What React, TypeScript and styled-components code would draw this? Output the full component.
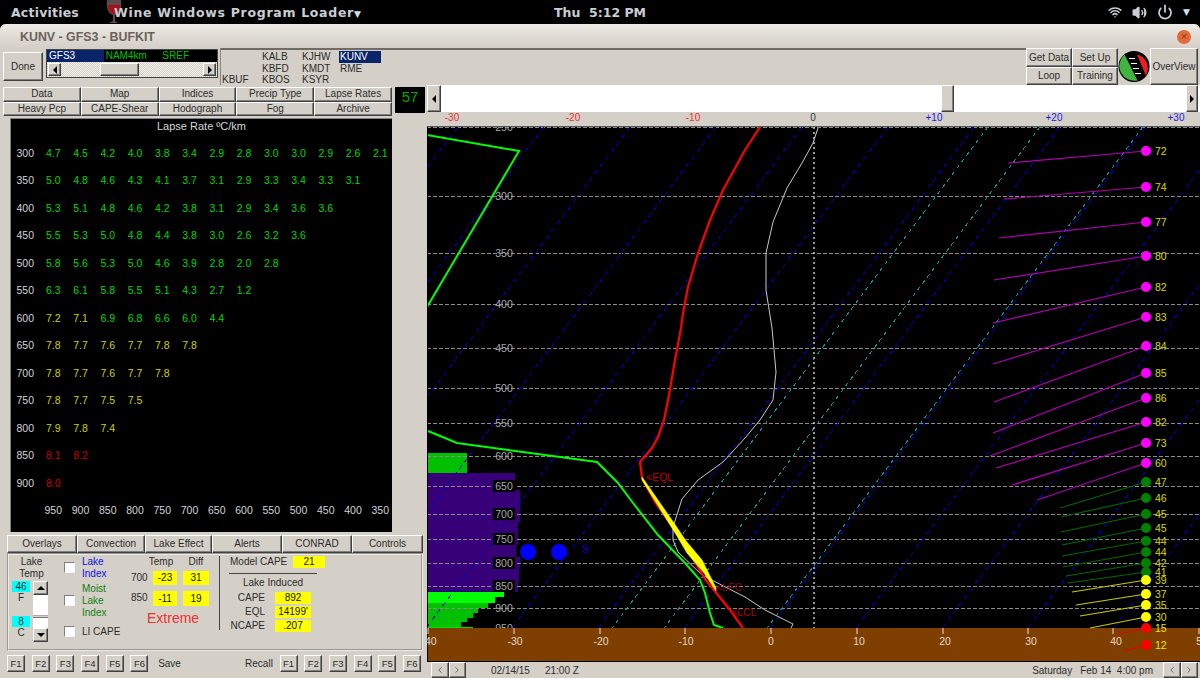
import styled, { createGlobalStyle, css } from 'styled-components';
import { ChevronLeft, ChevronRight, Power, Volume2, Wifi } from 'lucide-react';

const GlobalStyle = createGlobalStyle`
	html, body {
		margin: 0;
		padding: 0;
		background: #000;
		overflow: hidden;
	}
	* {
		box-sizing: border-box;
	}
`;

const face = '#d4d0c8';

const raised = css`
	background: ${face};
	border: 1px solid;
	border-color: #fff #404040 #404040 #fff;
	box-shadow: inset -1px -1px 0 #808080;
`;

const Desktop = styled.div`
	width: 1200px;
	height: 678px;
	overflow: hidden;
	background: #000;
	font-family: 'Liberation Sans', Arial, sans-serif;
	font-size: 10px;
	color: #2c2c2c;
`;

/* gnome top bar */
const TopBar = styled.div`
	height: 24px;
	display: grid;
	grid-template-columns: 1fr auto 1fr;
	align-items: center;
	color: #c9ced4;
	font-family: 'DejaVu Sans', sans-serif;
	font-size: 12.5px;
	font-weight: bold;
`;

const TopLeft = styled.div`
	display: flex;
	align-items: center;
	padding-left: 11px;
	letter-spacing: 0.2px;
`;

const AppName = styled.span`
	margin-left: -9px;
	white-space: nowrap;
	letter-spacing: 0.7px;
`;

const Glass = styled.svg`
	margin-left: 26px;
	flex: none;
`;

const Clock = styled.div`
	white-space: pre;
`;

const TopRight = styled.div`
	display: flex;
	justify-content: flex-end;
	align-items: center;
	gap: 10px;
	padding-right: 10px;
`;

const MenuCaret = styled.span`
	font-size: 9px;
	color: #cfe0ee;
`;

const Window = styled.div`
	height: 654px;
	background: ${face};
	border-radius: 6px 6px 0 0;
	overflow: hidden;
`;

const TitleBar = styled.div`
	height: 24px;
	padding: 2px 9px 0 20px;
	display: flex;
	align-items: center;
	justify-content: space-between;
	background: linear-gradient(#ece8e3, ${face});
	color: #6b6259;
	font-size: 12.4px;
	font-weight: bold;
`;

const CloseDot = styled.div`
	width: 14px;
	height: 14px;
	border-radius: 50%;
	background: #e2693a;
	color: #8a3a1c;
	font-size: 11px;
	line-height: 13px;
	text-align: center;
	font-weight: normal;
`;

const Toolbar = styled.div`
	height: 37px;
	display: flex;
	padding: 0 2px 0 3px;
`;

const DoneButton = styled.button`
	${raised}
	width: 40px;
	height: 29px;
	margin-top: 4px;
	margin-right: 3px;
	padding: 0;
	font: inherit;
	font-size: 10px;
	color: #2c2c2c;
`;

const ModelBox = styled.div`
	width: 172px;
	height: 29px;
	margin-top: 1px;
	background: #444;
	padding: 1px;
`;

const ModelList = styled.div`
	height: 12px;
	background: #000;
	display: flex;
	line-height: 12px;
`;

const ModelName = styled.span<{ $active?: boolean }>`
	width: 57px;
	padding-left: 2px;
	background: ${(p) => (p.$active ? '#0a246a' : 'transparent')};
	color: ${(p) => (p.$active ? '#fff' : '#00c000')};
`;

const ModelScroll = styled.div`
	height: 15px;
	padding: 1px;
	display: flex;
	background: repeating-conic-gradient(#f2f0ec 0 25%, #d4d0c8 0 50%) 0 0 / 2px 2px;
`;

const ScrollButton = styled.div<{ $width?: number }>`
	${raised}
	width: ${(p) => p.$width ?? 13}px;
	height: 100%;
	flex: none;
	display: flex;
	align-items: center;
	justify-content: center;
`;

const Arrow = styled.span<{ $dir: 'left' | 'right' | 'up' | 'down' }>`
	width: 0;
	height: 0;
	border: 4px solid transparent;
	${(p) => p.$dir === 'left' && 'border-right-color: #000; border-left-width: 0;'}
	${(p) => p.$dir === 'right' && 'border-left-color: #000; border-right-width: 0;'}
	${(p) => p.$dir === 'up' && 'border-bottom-color: #000; border-top-width: 0;'}
	${(p) => p.$dir === 'down' && 'border-top-color: #000; border-bottom-width: 0;'}
`;

const Spacer = styled.div<{ $width?: number }>`
	${(p) => (p.$width ? `width: ${p.$width}px; flex: none;` : 'flex: 1;')}
`;

const StationList = styled.div`
	flex: 1;
	margin-left: 2px;
	border-top: 2px solid #6f6c66;
	border-left: 1px solid #8a8780;
	padding: 1px 0 0 0;
	display: grid;
	grid-template-columns: 40px 40px 38px 42px;
	grid-auto-rows: 11.5px;
	grid-auto-flow: column;
	grid-template-rows: repeat(3, 11.5px);
	line-height: 11.5px;
	justify-content: start;
`;

const Station = styled.span<{ $active?: boolean }>`
	padding-left: 1px;
	background: ${(p) => (p.$active ? '#0a246a' : 'transparent')};
	color: ${(p) => (p.$active ? '#fff' : '#2c2c2c')};
`;

const CommandGrid = styled.div`
	width: 92px;
	display: grid;
	grid-template-columns: 1fr 1fr;
	grid-template-rows: 1fr 1fr;
`;

const Command = styled.div`
	${raised}
	display: flex;
	align-items: center;
	justify-content: center;
	font-size: 10px;
`;

const RoadIcon = styled.svg`
	flex: none;
	margin-top: 2px;
`;

const OverViewButton = styled(Command)`
	width: 48px;
`;

const Main = styled.div`
	display: flex;
	height: 593px;
`;

const LeftColumn = styled.div`
	width: 427px;
	flex: none;
	display: flex;
	flex-direction: column;
`;

const RightColumn = styled.div`
	width: 773px;
	flex: none;
	display: flex;
	flex-direction: column;
`;

const TabRow = styled.div`
	display: flex;
	height: 30px;
	padding: 2px 0 0 3px;
`;

const TabGrid = styled.div`
	width: 389px;
	display: grid;
	grid-template-columns: repeat(5, 1fr);
	grid-template-rows: 14.5px 14.5px;
`;

const Tab = styled.div`
	${raised}
	display: flex;
	align-items: center;
	justify-content: center;
	font-size: 10px;
	line-height: 1;
`;

const Readout = styled.div`
	width: 30px;
	height: 26px;
	margin-left: 3px;
	background: #000;
	color: #00a800;
	font-size: 15px;
	line-height: 20px;
	text-align: center;
`;

const LapsePanel = styled.div`
	width: 382px;
	height: 414px;
	margin: 3px 0 0 10px;
	background: #000;
	border-top: 1px solid #808080;
	border-left: 1px solid #808080;
	color: #d0d0d0;
	font-size: 10.5px;
`;

const LapseTitle = styled.div`
	height: 15px;
	line-height: 15px;
	text-align: center;
	color: #d8d8d8;
	font-size: 11px;
`;

const LapseGrid = styled.div`
	margin-top: 5px;
	display: grid;
	grid-template-columns: 28.6px repeat(13, 27.25px);
	grid-auto-rows: 27.5px;
	align-items: center;
	text-align: center;
`;

const Level = styled.span`
	color: #d0d4d8;
`;

const LapseValue = styled.span<{ $value: number }>`
	color: ${(p) => (p.$value >= 8 ? '#c80000' : p.$value >= 7 ? '#d0d000' : '#00d800')};
`;

const LakeTabs = styled.div`
	display: grid;
	grid-template-columns: 70px 68px 67px 70px 70px 71px;
	margin: 3px 0 0 7px;
	width: 416px;
	height: 18px;
`;

const LakePanel = styled.div`
	width: 416px;
	height: 98px;
	margin-left: 7px;
	border: 2px groove #eceae4;
	padding-top: 1px;
	display: flex;
	line-height: 12px;
`;

const TempColumn = styled.div`
	width: 39px;
	margin-left: 1px;
	display: flex;
	flex-direction: column;
`;

const CenterText = styled.div`
	padding-left: 4px;
	text-align: center;
`;

const TempControl = styled.div`
	margin-top: 1px;
	display: flex;
	gap: 3px;
	padding-left: 2px;
`;

const TempValues = styled.div`
	width: 18px;
	display: grid;
	grid-template-rows: 11px 12px 12px 11px 13px;
	text-align: center;
	line-height: 11px;
`;

const CyanValue = styled.div`
	background: #00ffff;
`;

const SpinColumn = styled.div`
	width: 15px;
	display: flex;
	flex-direction: column;
`;

const SpinTrack = styled.div`
	height: 33px;
	background: #fff;
	padding-top: 20px;
`;

const SpinThumb = styled.div`
	height: 3px;
	border-top: 1px solid #aaa;
	border-bottom: 1px solid #777;
	background: ${face};
`;

const SpinButton = styled(ScrollButton)`
	width: 15px;
	height: 14px;
`;

const CheckColumn = styled.div`
	width: 67px;
	margin-left: 15px;
	flex: none;
	display: flex;
	flex-direction: column;
	line-height: 11.7px;
`;

const CheckRow = styled.div<{ $top?: number }>`
	display: flex;
	align-items: center;
	gap: 7px;
	margin-top: ${(p) => p.$top ?? 0}px;
`;

const CheckBox = styled.div`
	width: 11px;
	height: 11px;
	flex: none;
	background: #fff;
	border: 1px solid;
	border-color: #808080 #f4f4f4 #f4f4f4 #808080;
`;

const CheckLabel = styled.div<{ $color?: string }>`
	color: ${(p) => p.$color ?? '#2c2c2c'};
	width: 44px;
`;

const TableColumn = styled.div`
	width: 78px;
	flex: none;
`;

const LakeTable = styled.div`
	display: grid;
	grid-template-columns: 16px 24px 26px;
	column-gap: 6px;
	grid-template-rows: 15px 20px 15px;
	align-items: start;
	text-align: center;
`;

const TempHeading = styled.span`
	margin-left: -8px;
`;

const YellowCell = styled.div<{ $height?: number }>`
	height: ${(p) => p.$height ?? 12}px;
	line-height: ${(p) => p.$height ?? 12}px;
	background: #ffff00;
	text-align: center;
	color: #111;
`;

const RowLabel = styled.div`
	line-height: 14px;
`;

const Extreme = styled.div`
	margin: 4px 0 0 16px;
	width: 52px;
	text-align: center;
	font-size: 14px;
	line-height: 16px;
	color: #f03030;
	white-space: nowrap;
`;

const Divider = styled.div`
	width: 1px;
	height: 74px;
	margin-left: 10px;
	background: #444;
	flex: none;
`;

const CapeColumn = styled.div`
	margin-left: 9px;
	width: 100px;
	flex: none;
`;

const ModelCape = styled.div`
	display: grid;
	grid-template-columns: 63px 32px;
	padding-left: 1px;
	white-space: nowrap;
`;

const CapeRule = styled.div`
	width: 88px;
	height: 1px;
	margin-top: 5px;
	background: #444;
`;

const CapeHeading = styled.div`
	width: 88px;
	margin-top: 3px;
	text-align: center;
	white-space: nowrap;
`;

const CapeRows = styled.div`
	margin-top: 3px;
	display: grid;
	grid-template-columns: 36px 36px;
	column-gap: 10px;
	row-gap: 2px;
`;

const CapeLabel = styled.div`
	text-align: right;
`;

const FKeyRow = styled.div`
	width: 414px;
	margin: 4px 0 0 7px;
	display: flex;
	justify-content: space-between;
	align-items: center;
`;

const FKeyGroup = styled.div`
	display: flex;
	align-items: center;
	gap: 6.7px;
`;

const FKey = styled.div`
	${raised}
	width: 18px;
	height: 17px;
	display: flex;
	align-items: center;
	justify-content: center;
	font-size: 9.5px;
`;

const SaveLabel = styled.span`
	margin-left: 3px;
`;

const ProfileBar = styled.div`
	height: 27px;
	display: flex;
	background: #fff;
	padding-right: 2px;
`;

const ProfileThumb = styled(ScrollButton)`
	margin-left: 500px;
`;

const Plot = styled.svg`
	display: block;
	flex: none;
	font-family: 'Liberation Sans', Arial, sans-serif;
`;

const StatusBar = styled.div`
	height: 16px;
	display: flex;
	align-items: center;
	white-space: pre;
	padding: 0 2px 0 4px;
	font-size: 10px;
`;

const NavPair = styled.div`
	width: 35px;
	height: 16px;
	flex: none;
	display: grid;
	grid-template-columns: 1fr 1fr;
`;

const NavButton = styled.div`
	${raised}
	display: flex;
	align-items: center;
	justify-content: center;
	color: #555;
`;

const lapseRows: [number, number[]][] = [
	[300, [4.7, 4.5, 4.2, 4.0, 3.8, 3.4, 2.9, 2.8, 3.0, 3.0, 2.9, 2.6, 2.1]],
	[350, [5.0, 4.8, 4.6, 4.3, 4.1, 3.7, 3.1, 2.9, 3.3, 3.4, 3.3, 3.1]],
	[400, [5.3, 5.1, 4.8, 4.6, 4.2, 3.8, 3.1, 2.9, 3.4, 3.6, 3.6]],
	[450, [5.5, 5.3, 5.0, 4.8, 4.4, 3.8, 3.0, 2.6, 3.2, 3.6]],
	[500, [5.8, 5.6, 5.3, 5.0, 4.6, 3.9, 2.8, 2.0, 2.8]],
	[550, [6.3, 6.1, 5.8, 5.5, 5.1, 4.3, 2.7, 1.2]],
	[600, [7.2, 7.1, 6.9, 6.8, 6.6, 6.0, 4.4]],
	[650, [7.8, 7.7, 7.6, 7.7, 7.8, 7.8]],
	[700, [7.8, 7.7, 7.6, 7.7, 7.8]],
	[750, [7.8, 7.7, 7.5, 7.5]],
	[800, [7.9, 7.8, 7.4]],
	[850, [8.1, 8.2]],
	[900, [8.0]],
];

const lapseLevels = [950, 900, 850, 800, 750, 700, 650, 600, 550, 500, 450, 400, 350];

const tabs = [
	'Data', 'Map', 'Indices', 'Precip Type', 'Lapse Rates',
	'Heavy Pcp', 'CAPE-Shear', 'Hodograph', 'Fog', 'Archive',
];

const lakeTabs = ['Overlays', 'Convection', 'Lake Effect', 'Alerts', 'CONRAD', 'Controls'];
const fKeys = ['F1', 'F2', 'F3', 'F4', 'F5', 'F6'];

// chart data is in page pixels, the svg viewBox starts at the plot's corner
const isobars: [number, number][] = [
	[250, 127], [300, 196], [350, 253], [400, 304], [450, 348],
	[500, 388], [550, 423], [600, 456], [650, 486], [700, 514],
	[750, 539], [800, 563], [850, 586], [900, 608], [950, 628],
];

const topAxis: [string, number, string][] = [
	['-30', 452, '#e83030'], ['-20', 573, '#e83030'], ['-10', 693, '#e83030'],
	['0', 813, '#333'], ['+10', 934, '#2020e0'], ['+20', 1054, '#2020e0'], ['+30', 1176, '#2020e0'],
];

// label, tick x, label x
const bottomAxis: [string, number, number][] = [
	['-40', 428, 429], ['-30', 514, 515], ['-20', 600, 601], ['-10', 685, 686], ['0', 771, 771],
	['10', 857, 859], ['20', 943, 945], ['30', 1028, 1031], ['40', 1113, 1116], ['50', 1199, 1202],
];

const temperature = '760,127 745,150 723,190 710,220 698,253 688,287 683,313 681,328 675,360 669,395 664,420 658,437 652,448 640,462 642,478 655,502 670,523 682,540 705,579 718,595 730,610 743,628';
const dewpointUpper = '427,135 519,151 427,307';
const dewpointLower = '428,431 457,443 597,462 618,483 633,503 658,535 685,563 700,580 705,593 710,613 714,625 723,628';
const wetbulb = '818,128 813,143 802,163 787,188 773,222 766,253 766,290 772,328 776,372 773,400 760,420 745,438 723,462 698,480 682,499 673,527 673,540 678,552 702,575 745,597 765,610 793,624 791,628';

const histogram: [number, number, number, string][] = [
	[453, 473, 467, '#00c000'],
	[473, 490, 515, '#380078'],
	[490, 522, 520, '#380078'],
	[522, 545, 518, '#380078'],
	[545, 557, 516, '#380078'],
	[557, 567, 520, '#380078'],
	[567, 583, 519, '#380078'],
	[583, 592, 518, '#380078'],
	[592, 597, 504, '#00ff00'],
	[597, 603, 495, '#00ff00'],
	[603, 608, 488, '#00c000'],
	[608, 613, 478, '#00c000'],
	[613, 618, 473, '#00c000'],
	[618, 622, 467, '#00c000'],
	[622, 627, 461, '#00c000'],
	[627, 628, 473, '#00e000'],
];

const barbs: [number, number, number, number, string, string][] = [
	[72, 151, 1008, 163, '#ff00ff', '#b000b0'],
	[74, 187, 1004, 199, '#ff00ff', '#b000b0'],
	[77, 222, 999, 238, '#ff00ff', '#b000b0'],
	[80, 256, 994, 280, '#ff00ff', '#b000b0'],
	[82, 287, 993, 323, '#ff00ff', '#b000b0'],
	[83, 317, 993, 364, '#ff00ff', '#b000b0'],
	[84, 346, 994, 402, '#ff00ff', '#b000b0'],
	[85, 373, 993, 433, '#ff00ff', '#b000b0'],
	[86, 398, 990, 456, '#ff00ff', '#b000b0'],
	[82, 422, 996, 468, '#ff00ff', '#b000b0'],
	[73, 443, 1012, 485, '#ff00ff', '#b000b0'],
	[60, 463, 1037, 500, '#ff00ff', '#b000b0'],
	[47, 482, 1060, 508, '#008000', '#006800'],
	[46, 498, 1061, 517, '#008000', '#006800'],
	[45, 514, 1061, 532, '#008000', '#006800'],
	[45, 528, 1062, 545, '#008000', '#006800'],
	[44, 541, 1062, 556, '#008000', '#006800'],
	[44, 552, 1063, 567, '#008000', '#006800'],
	[42, 563, 1066, 576, '#008000', '#006800'],
	[41, 572, 1068, 583, '#008000', '#006800'],
	[39, 580, 1072, 592, '#ffff00', '#c8c800'],
	[37, 594, 1076, 605, '#ffff00', '#c8c800'],
	[35, 605, 1080, 616, '#ffff00', '#c8c800'],
	[30, 617, 1090, 628, '#ffff00', '#c8c800'],
	[15, 628, 1117, 635, '#ff0000', '#e00000'],
	[12, 645, 1124, 651, '#ff0000', '#e00000'],
];

const skewDx = 0.75 * 535;
const isotherms = Array.from({ length: 20 }, (_, k) => 458 - 86 * 1 + 86 * k);
const mixingLines = [988, 1040, 1143];

const SoundingPlot = () => (
	<Plot width={773} height={550} viewBox="427 112 773 550">
		<rect x={427} y={126} width={773} height={536} fill="#000" />
		{histogram.map(([y1, y2, x, fill]) => (
			<rect key={y1} x={427} y={y1} width={x - 427} height={y2 - y1} fill={fill} />
		))}
		{isobars.map(([p, y]) => (
			<line key={p} x1={427} x2={1200} y1={y} y2={y} stroke="#8c8c8c" strokeDasharray="4 2" shapeRendering="crispEdges" />
		))}
		{isotherms.map((x) => (
			<line key={x} x1={x} y1={127} x2={x - skewDx} y2={662} stroke="#0000b8" strokeDasharray="5 4" shapeRendering="crispEdges" />
		))}
		{mixingLines.map((x) => (
			<line key={x} x1={x} y1={127} x2={x - skewDx} y2={662} stroke="#009c9c" strokeDasharray="4 4" shapeRendering="crispEdges" />
		))}
		<line x1={814} x2={814} y1={127} y2={662} stroke="#c8c8c8" strokeWidth={1.5} strokeDasharray="2 3" />
		{isobars.map(([p, y]) => (
			<g key={p}>
				{p >= 650 && p <= 850 && <rect x={493} y={y - 6} width={22} height={12} fill="#000" />}
				<text x={504} y={y + 4} textAnchor="middle" fontSize={10.5} fill="#aaa">{p}</text>
			</g>
		))}
		<circle cx={528} cy={552} r={8} fill="#0000ff" />
		<circle cx={559} cy={552} r={8} fill="#0000ff" />
		<text x={582} y={553} fontSize={11} fill="#0000e0">S</text>
		<polyline points={dewpointUpper} fill="none" stroke="#00ff00" strokeWidth={2} />
		<polyline points={dewpointLower} fill="none" stroke="#00ff00" strokeWidth={2} />
		<polyline points={wetbulb} fill="none" stroke="#c8c8c8" strokeWidth={1} />
		<polyline points={temperature} fill="none" stroke="#ff0000" strokeWidth={2.2} />
		<polygon points="642,477 676,526 686,541 702,560 716,588 716,591 704,573 687,553 677,536 642,480" fill="#ffff00" stroke="#ffff00" strokeWidth={0.6} />
		<text x={646} y={481} fontSize={10.5} fill="#c00000">{'<EQL'}</text>
		<text x={716} y={591} fontSize={10.5} fill="#900000">{'<LFC'}</text>
		<text x={731} y={616} fontSize={10.5} fill="#b00000">{'<LCL'}</text>
		<rect x={427} y={628} width={773} height={33} fill="#7f3f00" />
		<rect x={427} y={661} width={773} height={1} fill="#000" />
		<rect x={427} y={126} width={1} height={536} fill="#000" />
		{barbs.map(([speed, y, endX, endY, dot, line], i) => (
			<g key={i}>
				<line x1={1146} y1={y} x2={endX} y2={endY} stroke={line} strokeWidth={1.2} />
				<circle cx={1146} cy={y} r={5} fill={dot} />
				<text x={1155} y={y + 4} fontSize={10.5} fill={speed === 15 || speed === 12 ? '#e8e800' : '#d8d800'}>{speed}</text>
			</g>
		))}
		{bottomAxis.map(([label, tick, x]) => (
			<g key={label}>
				<line x1={tick} x2={tick} y1={628} y2={634} stroke="#e8e0d8" />
				<text x={x} y={645} textAnchor="middle" fontSize={10.5} fill="#e4d8cc">{label}</text>
			</g>
		))}
		<rect x={1005} y={126} width={4} height={1} fill="#ff00ff" />
		<rect x={427} y={112} width={773} height={14} fill={face} />
		<line x1={427} x2={1200} y1={126.5} y2={126.5} stroke="#555" />
		{topAxis.map(([label, x, fill]) => (
			<text key={label} x={x} y={121} textAnchor="middle" fontSize={10} fill={fill}>{label}</text>
		))}
	</Plot>
);

const App = () => (
	<Desktop>
		<GlobalStyle />
		<TopBar>
			<TopLeft>
				Activities
				<Glass width={18} height={24} viewBox="0 0 18 24">
					<path d="M2 0 C1 6 2 13 8 15 L8 21 L4 23 L13 23 L10 21 L10 15 C16 13 17 6 16 0 Z" fill="#5a4a4a" />
					<path d="M3 5 C3 10 5 13 9 14 C13 13 15 10 15 5 Z" fill="#a5121c" />
				</Glass>
				<AppName>Wine Windows Program Loader<MenuCaret>▼</MenuCaret></AppName>
			</TopLeft>
			<Clock>{'Thu  5:12 PM'}</Clock>
			<TopRight>
				<Wifi size={14} strokeWidth={2.6} />
				<Volume2 size={15} strokeWidth={2.4} fill="currentColor" />
				<Power size={16} strokeWidth={2.6} />
				<MenuCaret>▼</MenuCaret>
			</TopRight>
		</TopBar>
		<Window>
			<TitleBar>
				KUNV - GFS3 - BUFKIT
				<CloseDot>×</CloseDot>
			</TitleBar>
			<Toolbar>
				<DoneButton>Done</DoneButton>
				<ModelBox>
					<ModelList>
						<ModelName $active>GFS3</ModelName>
						<ModelName>NAM4km</ModelName>
						<ModelName>SREF</ModelName>
					</ModelList>
					<ModelScroll>
						<ScrollButton><Arrow $dir="left" /></ScrollButton>
						<Spacer $width={39} />
						<ScrollButton $width={39} />
						<Spacer />
						<ScrollButton><Arrow $dir="right" /></ScrollButton>
					</ModelScroll>
				</ModelBox>
				<StationList>
					<Station />
					<Station />
					<Station>KBUF</Station>
					<Station>KALB</Station>
					<Station>KBFD</Station>
					<Station>KBOS</Station>
					<Station>KJHW</Station>
					<Station>KMDT</Station>
					<Station>KSYR</Station>
					<Station $active>KUNV</Station>
					<Station>RME</Station>
				</StationList>
				<CommandGrid>
					<Command>Get Data</Command>
					<Command>Set Up</Command>
					<Command>Loop</Command>
					<Command>Training</Command>
				</CommandGrid>
				<RoadIcon width={32} height={33} viewBox="0 0 32 32">
					<circle cx={16} cy={16} r={15.5} fill="#000" />
					<path d="M6.5 4 A 15 15 0 0 0 19.5 30 Z" fill="#3fb53f" />
					<path d="M19 4 A 14 14 0 0 1 27.8 25 Z" fill="#ee1c25" />
					<path d="M11 8 h6 M13 13 h6 M15 18 h6 M17 23 h6" stroke="#fff" strokeWidth={1.2} />
				</RoadIcon>
				<OverViewButton>OverView</OverViewButton>
			</Toolbar>
			<Main>
				<LeftColumn>
					<TabRow>
						<TabGrid>
							{tabs.map((t) => <Tab key={t}>{t}</Tab>)}
						</TabGrid>
						<Readout>57</Readout>
					</TabRow>
					<LapsePanel>
						<LapseTitle>Lapse Rate ºC/km</LapseTitle>
						<LapseGrid>
							{lapseRows.map(([level, values]) => [
								<Level key={level}>{level}</Level>,
								...Array.from({ length: 13 }, (_, i) => (
									<span key={`${level}-${i}`}>
										{values[i] !== undefined && <LapseValue $value={values[i]}>{values[i].toFixed(1)}</LapseValue>}
									</span>
								)),
							])}
							<span />
							{lapseLevels.map((l) => <Level key={l}>{l}</Level>)}
						</LapseGrid>
					</LapsePanel>
					<LakeTabs>
						{lakeTabs.map((t) => <Tab key={t}>{t}</Tab>)}
					</LakeTabs>
					<LakePanel>
						<TempColumn>
							<CenterText>Lake<br />Temp</CenterText>
							<TempControl>
								<TempValues>
									<CyanValue>46</CyanValue>
									<span>F</span>
									<span />
									<CyanValue>8</CyanValue>
									<span>C</span>
								</TempValues>
								<SpinColumn>
									<SpinButton><Arrow $dir="up" /></SpinButton>
									<SpinTrack><SpinThumb /></SpinTrack>
									<SpinButton><Arrow $dir="down" /></SpinButton>
								</SpinColumn>
							</TempControl>
						</TempColumn>
						<CheckColumn>
							<CheckRow>
								<CheckBox />
								<CheckLabel $color="#1010e0">Lake Index</CheckLabel>
							</CheckRow>
							<CheckRow $top={4}>
								<CheckBox />
								<CheckLabel $color="#108010">Moist Lake Index</CheckLabel>
							</CheckRow>
							<CheckRow $top={7}>
								<CheckBox />
								<CheckLabel>LI CAPE</CheckLabel>
							</CheckRow>
						</CheckColumn>
						<TableColumn>
							<LakeTable>
								<span />
								<TempHeading>Temp</TempHeading>
								<span>Diff</span>
								<RowLabel>700</RowLabel>
								<YellowCell $height={14}>-23</YellowCell>
								<YellowCell $height={14}>31</YellowCell>
								<RowLabel>850</RowLabel>
								<YellowCell $height={15}>-11</YellowCell>
								<YellowCell $height={15}>19</YellowCell>
							</LakeTable>
							<Extreme>Extreme</Extreme>
						</TableColumn>
						<Divider />
						<CapeColumn>
							<ModelCape>
								Model CAPE
								<YellowCell>21</YellowCell>
							</ModelCape>
							<CapeRule />
							<CapeHeading>Lake Induced</CapeHeading>
							<CapeRows>
								<CapeLabel>CAPE</CapeLabel>
								<YellowCell>892</YellowCell>
								<CapeLabel>EQL</CapeLabel>
								<YellowCell>14199'</YellowCell>
								<CapeLabel>NCAPE</CapeLabel>
								<YellowCell>.207</YellowCell>
							</CapeRows>
						</CapeColumn>
					</LakePanel>
					<FKeyRow>
						<FKeyGroup>
							{fKeys.map((k) => <FKey key={k}>{k}</FKey>)}
							<SaveLabel>Save</SaveLabel>
						</FKeyGroup>
						<FKeyGroup>
							Recall
							{fKeys.map((k) => <FKey key={k}>{k}</FKey>)}
						</FKeyGroup>
					</FKeyRow>
				</LeftColumn>
				<RightColumn>
					<ProfileBar>
						<ScrollButton $width={14}><Arrow $dir="left" /></ScrollButton>
						<ProfileThumb $width={13} />
						<Spacer />
						<ScrollButton $width={12}><Arrow $dir="right" /></ScrollButton>
					</ProfileBar>
					<SoundingPlot />
					<StatusBar>
						<NavPair>
							<NavButton><ChevronLeft size={10} /></NavButton>
							<NavButton><ChevronRight size={10} /></NavButton>
						</NavPair>
						<Spacer $width={25} />
						{'02/14/15'}
						<Spacer $width={15} />
						{'21:00 Z'}
						<Spacer />
						{'Saturday'}
						<Spacer $width={8} />
						{'Feb 14  4:00 pm'}
						<Spacer $width={10} />
						<NavPair>
							<NavButton><ChevronLeft size={10} /></NavButton>
							<NavButton><ChevronRight size={10} /></NavButton>
						</NavPair>
					</StatusBar>
				</RightColumn>
			</Main>
		</Window>
	</Desktop>
);

export default App;
